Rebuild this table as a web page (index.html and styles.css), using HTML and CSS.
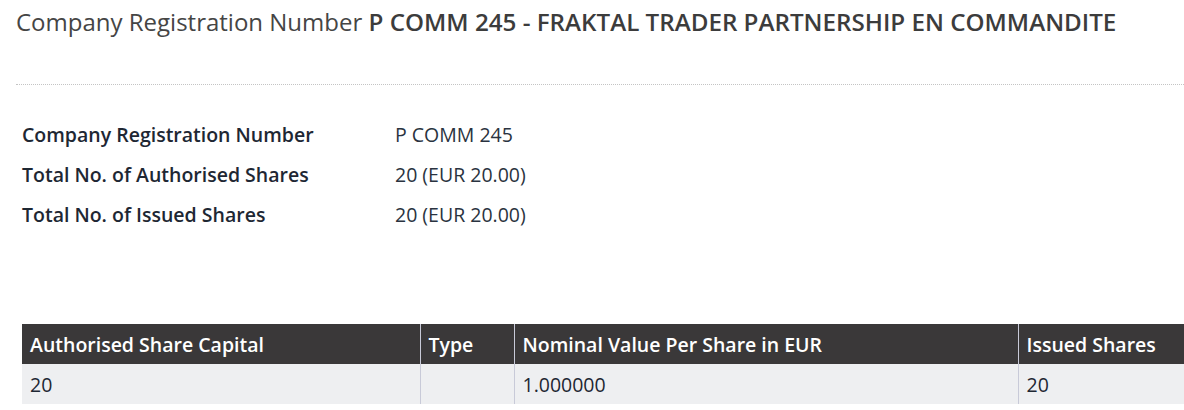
FILE: index.html
```html
<!DOCTYPE html>
<html>
<head>
<meta charset="utf-8">
<link rel="stylesheet" href="styles.css">
</head>
<body>
<div class="page">
  <h1 class="title">Company Registration Number <strong>P COMM 245 - FRAKTAL TRADER PARTNERSHIP EN COMMANDITE</strong></h1>
  <hr class="divider">
  <dl class="info">
    <div class="row"><dt>Company Registration Number</dt><dd>P COMM 245</dd></div>
    <div class="row"><dt>Total No. of Authorised Shares</dt><dd>20 (EUR 20.00)</dd></div>
    <div class="row"><dt>Total No. of Issued Shares</dt><dd>20 (EUR 20.00)</dd></div>
  </dl>
  <table class="shares">
    <colgroup>
      <col class="c1"><col class="c2"><col class="c3"><col class="c4">
    </colgroup>
    <thead>
      <tr><th>Authorised Share Capital</th><th>Type</th><th>Nominal Value Per Share in EUR</th><th>Issued Shares</th></tr>
    </thead>
    <tbody>
      <tr><td>20</td><td></td><td>1.000000</td><td>20</td></tr>
    </tbody>
  </table>
</div>
</body>
</html>
```
FILE: styles.css
```css
html, body {
  margin: 0;
  padding: 0;
  background: #fff;
  overflow: hidden;
}
body {
  font-family: "Open Sans", "DejaVu Sans", sans-serif;
  color: #1e2733;
}
.page {
  padding: 0 0 0 16px;
  width: 1300px;
}
.title {
  margin: 0;
  padding-top: 5px;
  font-size: 24px;
  font-weight: 400;
  line-height: 34px;
  color: #454545;
  white-space: nowrap;
}
.title strong {
  font-weight: 600;
  font-size: 24.2px;
  color: #3c3c3c;
}
.divider {
  border: 0;
  border-top: 1px dotted #c4c4c4;
  margin: 45px 0 0 0;
  width: 1168px;
  height: 0;
}
.info {
  margin: 29px 0 0 6px;
  padding: 0;
}
.info .row {
  display: flex;
  height: 40px;
  align-items: center;
}
.info dt {
  width: 373px;
  font-weight: 600;
  font-size: 19.5px;
}
.info dd {
  margin: 0;
  font-size: 19.5px;
  color: #2a3340;
}
.shares {
  margin: 90px 0 0 6px;
  border-collapse: collapse;
  table-layout: fixed;
  width: 1200px;
  font-size: 19.5px;
}
.shares .c1 { width: 398px; }
.shares .c2 { width: 94px; }
.shares .c3 { width: 504px; }
.shares .c4 { width: 204px; }
.shares th {
  background: #3a3839;
  color: #fff;
  font-weight: 600;
  text-align: left;
  height: 40px;
  padding: 0 8px;
  border-left: 1px solid #c8cad8;
  white-space: nowrap;
}
.shares td {
  background: #eeeff1;
  height: 40px;
  padding: 0 8px;
  border-left: 1px solid #c8cad8;
  color: #1e2733;
}
.shares th:first-child, .shares td:first-child {
  border-left: 0;
}
```
